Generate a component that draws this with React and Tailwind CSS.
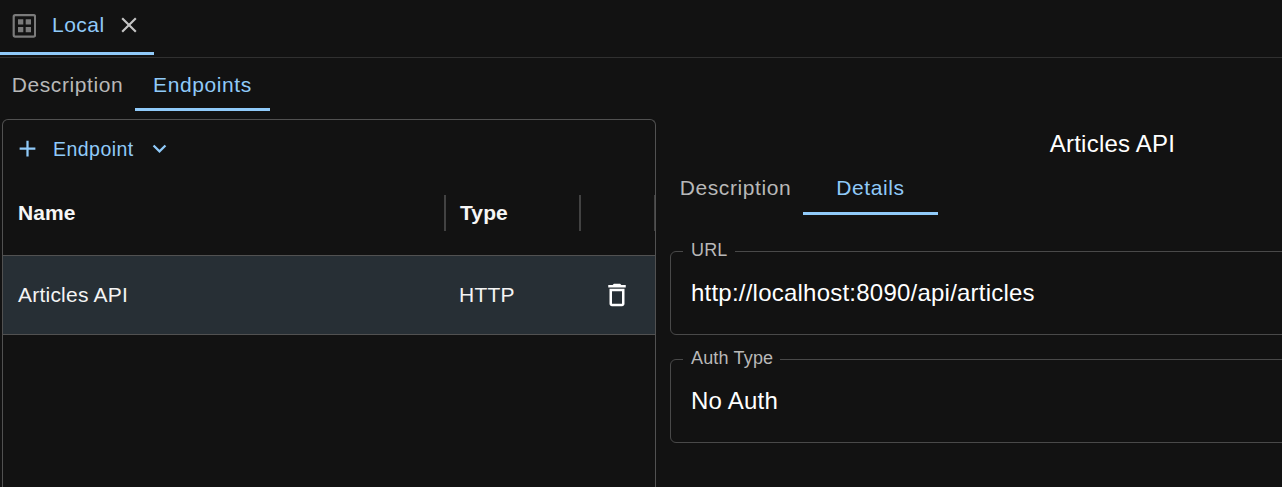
import { useState } from "react";
import { MdClose, MdAdd, MdKeyboardArrowDown } from "react-icons/md";

function GridIcon() {
  return (
    <svg width="24" height="24" viewBox="0 0 24 24" className="shrink-0 text-[#7a7a7a]">
      <rect x="1.700" y="1.200" width="21.4" height="21.4" rx="1.5" fill="none" stroke="currentColor" strokeWidth="2.2" />
      <path fill="currentColor" d="M6 5.200h5.300v5.300H6zM13.700 5.200h5.300v5.300h-5.300zM6 13h5.300v5.300H6zM13.700 13h5.300v5.300h-5.300z" />
    </svg>
  );
}

function TrashIcon() {
  return (
    <svg width="30" height="30" viewBox="0 0 24 24" fill="currentColor" className="text-white">
      <path d="M6 19c0 1.1.9 2 2 2h8c1.1 0 2-.9 2-2V7H6v12zM8 9h8v10H8V9zm7.500-5l-1-1h-5l-1 1H5v2h14V4z" />
    </svg>
  );
}

function Tab({ label, selected, onClick }) {
  return (
    <button
      onClick={onClick}
      className={`flex w-[135px] flex-col border-b-[3px] text-center text-[21px] leading-[26px] tracking-[0.6px] ${
        selected ? "border-[#90caf9] text-[#90caf9]" : "border-transparent text-[#b8b8b8]"
      }`}
    >
      <span className="w-full">{label}</span>
    </button>
  );
}

function Field({ label, value }) {
  return (
    <div className="relative flex h-[84px] w-[885px] items-center rounded-md border border-[#494949] px-5 text-2xl tracking-[0.225px] text-white">
      <span className="absolute -top-[14px] left-3 bg-[#121212] pr-[7px] pl-2 text-lg leading-6 tracking-[0.17px] text-[#b8b8b8]">
        {label}
      </span>
      <span>{value}</span>
    </div>
  );
}

export default function App() {
  const [tab, setTab] = useState("Endpoints");
  const [detail, setDetail] = useState("Details");
  return (
    <div className="flex h-[487px] w-full flex-col overflow-hidden bg-[#121212] font-['Liberation_Sans',Arial,sans-serif] text-white">
      <header className="flex h-[58px] shrink-0 items-start border-b border-[#303030]">
        <div className="flex h-[55px] w-[154px] items-center border-b-[3px] border-[#90caf9] pl-3 text-[21px] tracking-[0.5px] text-[#90caf9]">
          <GridIcon />
          <span className="mb-[2px] ml-4 w-[64px] leading-6">Local</span>
          <MdClose className="mb-[2px] size-[26px] text-[#c4c4c4]" />
        </div>
      </header>
      <nav className="flex h-[61px] shrink-0 pt-[14px] pb-2">
        {["Description", "Endpoints"].map((t) => (
          <Tab key={t} label={t} selected={t === tab} onClick={() => setTab(t)} />
        ))}
      </nav>
      <main className="flex flex-1">
        <section className="ml-[2px] flex w-[654px] shrink-0 flex-col rounded-t-md border border-b-0 border-[#515151]">
          <div className="flex h-[58px] items-center pl-[11px] text-[#90caf9]">
            <MdAdd className="mb-[2px] size-[27px]" />
            <span className="ml-3 w-[93px] text-[19.5px] leading-6 tracking-[0.46px]">Endpoint</span>
            <MdKeyboardArrowDown className="mb-px size-[27px]" />
          </div>
          <div className="flex h-[78px] items-center border-b border-[#515151] pb-[7px] text-[21px] font-bold tracking-[0.1px] text-[#f6f6f6]">
            <div className="flex h-9 w-[443px] items-center border-r-2 border-[#424242] pl-[15px]">Name</div>
            <div className="flex h-9 w-[135px] items-center border-r-2 border-[#424242] pl-[14px]">Type</div>
            <div className="h-9 flex-1 border-r border-[#424242]" />
          </div>
          <div className="flex h-[79px] items-center border-b border-[#515151] bg-[#272f35] text-[21px] tracking-[0.225px] text-[#f4f4f4]">
            <div className="w-[443px] pl-[15px]">Articles API</div>
            <div className="w-[135px] pl-[13px]">HTTP</div>
            <div className="flex flex-1 justify-center pr-[2px]">
              <TrashIcon />
            </div>
          </div>
        </section>
        <section className="ml-[14px] flex w-[885px] shrink-0 flex-col">
          <h1 className="mt-[9px] text-center text-2xl tracking-[0.225px]">Articles API</h1>
          <nav className="mt-[15px] -ml-[2px] flex h-10">
            {["Description", "Details"].map((t) => (
              <Tab key={t} label={t} selected={t === detail} onClick={() => setDetail(t)} />
            ))}
          </nav>
          <div className="mt-9 flex flex-col gap-6">
            <Field label="URL" value="http://localhost:8090/api/articles" />
            <Field label="Auth Type" value="No Auth" />
          </div>
        </section>
      </main>
    </div>
  );
}
